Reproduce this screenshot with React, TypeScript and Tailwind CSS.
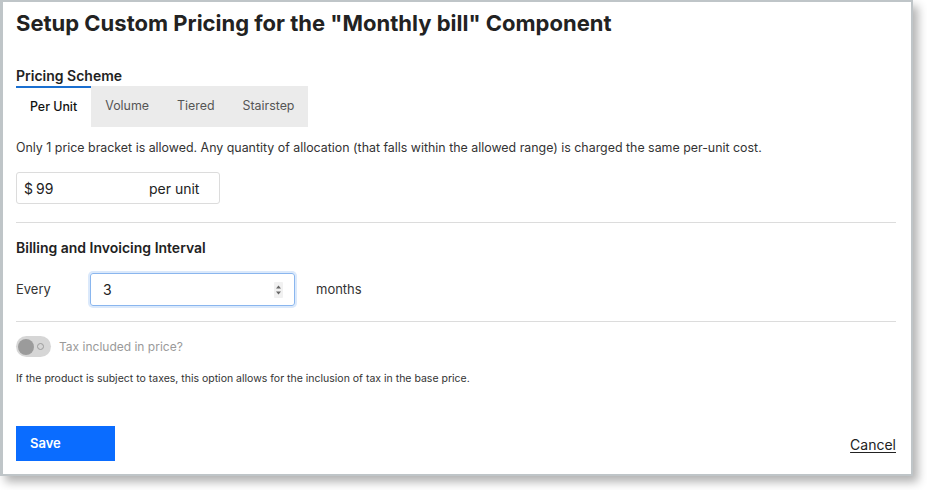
import { useState } from "react";

const TABS = ["Per Unit", "Volume", "Tiered", "Stairstep"];

export default function App() {
  const [tab, setTab] = useState("Per Unit");
  const [months, setMonths] = useState("3");

  return (
    <div className="w-[927px] h-[490px] bg-white" style={{ fontFamily: "Inter, 'Liberation Sans', sans-serif" }}>
      <div className="w-[913px] h-[476px] bg-white border-2 border-l-[3px] border-[#bfc5c8] shadow-[5px_6px_9px_rgba(0,0,0,0.3)] flex flex-col pl-[13px] pr-[15px]">
        <h1 className="pt-[6px] text-[22px] leading-[30px] font-bold text-[#222]">
          Setup Custom Pricing for the "Monthly bill" Component
        </h1>

        <div className="mt-[28px] text-[14px] leading-[20px] font-semibold text-[#222]">Pricing Scheme</div>
        <div className="flex h-[41px] text-[12.4px]">
          {TABS.map((t) => (
            <button
              key={t}
              onClick={() => setTab(t)}
              className={
                tab === t
                  ? "border-t-2 border-[#1a6fd0] bg-white px-[14px] font-medium text-[#111]"
                  : "bg-[#ebebeb] px-[14px] text-[#555]"
              }
            >
              {t}
            </button>
          ))}
        </div>

        <p className="mt-[12px] text-[12.4px] leading-[18px] text-[#333]">
          Only 1 price bracket is allowed. Any quantity of allocation (that falls within the allowed range) is charged the same per-unit cost.
        </p>

        <div className="mt-[15px] w-[204px] h-[32px] border border-[#dcdcdc] rounded-[3px] flex items-center text-[14px] text-[#222]">
          <span className="pl-[7px]">$</span>
          <span className="pl-[3px] w-[116px]">99</span>
          <span>per unit</span>
        </div>

        <div className="mt-[18px] border-t border-[#dcdcdc]" />

        <div className="mt-[15px] text-[14px] leading-[20px] font-semibold text-[#222]">Billing and Invoicing Interval</div>

        <div className="mt-[15px] flex items-center text-[13px] text-[#333]">
          <span className="w-[74px]">Every</span>
          <div className="w-[205px] h-[33px] border border-[#8ab6ee] rounded-[3px] ring-2 ring-[#dbe9fb] flex items-center pl-[12px] pr-[11px]">
            <input
              value={months}
              onChange={(e) => setMonths(e.target.value)}
              className="w-0 min-w-0 flex-1 outline-none text-[14px] text-[#222] bg-transparent"
            />
            <svg width="9" height="16" viewBox="0 0 9 16" className="shrink-0">
              <rect width="9" height="16" rx="1" fill="#f1f1f1" />
              <path d="M2 6.5 L4.5 3.5 L7 6.5 Z" fill="#666" />
              <path d="M2 9.5 L4.5 12.5 L7 9.5 Z" fill="#666" />
            </svg>
          </div>
          <span className="ml-[21px]">months</span>
        </div>

        <div className="mt-[15px] border-t border-[#dcdcdc]" />

        <div className="mt-[14px] flex items-center gap-[8px]">
          <div className="w-[35px] h-[21px] rounded-full bg-[#d6d6d6] flex items-center px-[2px]">
            <div className="w-[16px] h-[16px] rounded-full bg-[#9b9b9b]" />
            <div className="ml-[3px] w-[7px] h-[7px] rounded-full border border-[#9b9b9b]" />
          </div>
          <span className="text-[12px] text-[#9a9a9a]">Tax included in price?</span>
        </div>

        <p className="mt-[14px] text-[10.5px] leading-[16px] text-[#333]">
          If the product is subject to taxes, this option allows for the inclusion of tax in the base price.
        </p>

        <div className="mt-[39px] flex items-center justify-between">
          <button className="w-[99px] h-[35px] bg-[#0a6cff] text-white text-[13px] font-semibold text-left pl-[14px]">
            Save
          </button>
          <button className="mt-[1px] text-[14px] text-[#222] underline underline-offset-2">Cancel</button>
        </div>
      </div>
    </div>
  );
}
